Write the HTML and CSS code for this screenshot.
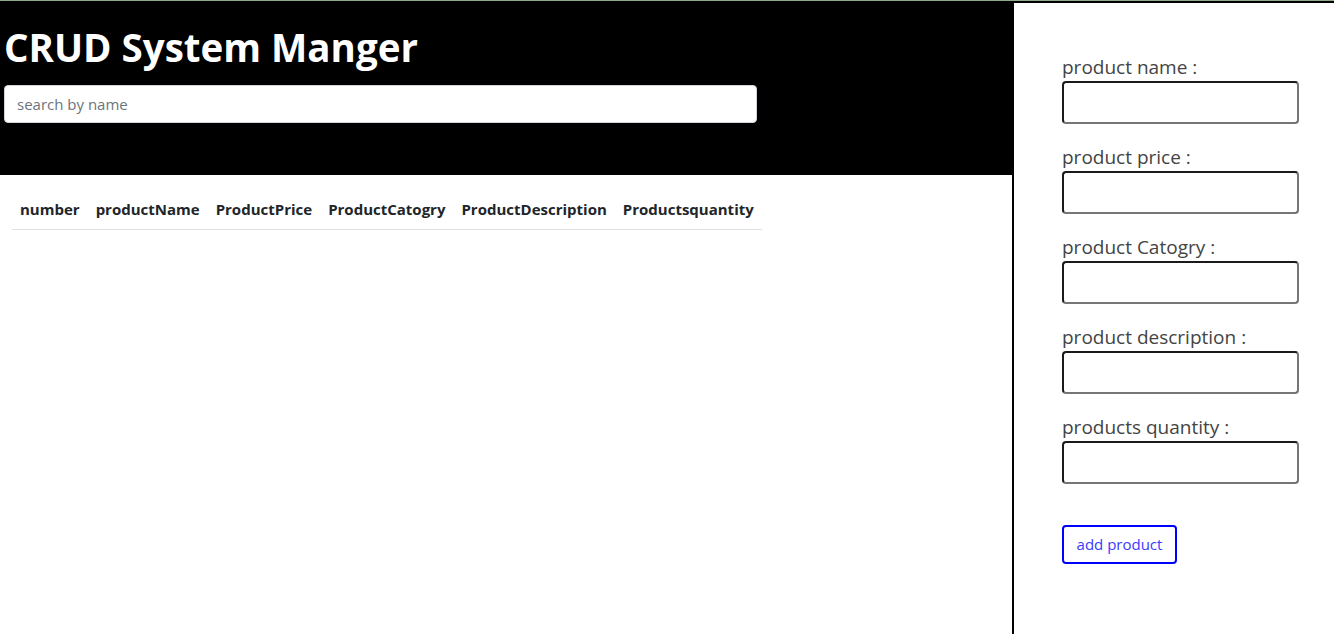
FILE: index.html
```html
<!DOCTYPE html>
<html lang="en">
<head>
<meta charset="utf-8">
<title>CRUD System Manger</title>
<link rel="stylesheet" href="styles.css">
</head>
<body>
<div class="page">
  <main class="main">
    <header class="hero">
      <h1 class="title">CRUD System Manger</h1>
      <input class="search" type="text" placeholder="search by name">
    </header>
    <table class="products">
      <thead>
        <tr>
          <th>number</th>
          <th>productName</th>
          <th>ProductPrice</th>
          <th>ProductCatogry</th>
          <th>ProductDescription</th>
          <th>Productsquantity</th>
        </tr>
      </thead>
      <tbody></tbody>
    </table>
  </main>
  <aside class="side">
    <form class="form">
      <label class="field-label" for="pname">product name :</label>
      <input class="field" id="pname" type="text">
      <label class="field-label" for="pprice">product price :</label>
      <input class="field" id="pprice" type="text">
      <label class="field-label" for="pcat">product Catogry :</label>
      <input class="field" id="pcat" type="text">
      <label class="field-label" for="pdesc">product description :</label>
      <input class="field" id="pdesc" type="text">
      <label class="field-label" for="pqty">products quantity :</label>
      <input class="field" id="pqty" type="text">
      <button class="add-btn" type="button">add product</button>
    </form>
  </aside>
</div>
</body>
</html>
```

FILE: styles.css
```css
* { box-sizing: border-box; }
html, body { margin: 0; padding: 0; }
body {
  font-family: "Open Sans", "Noto Sans", sans-serif;
  font-size: 16px;
  line-height: 1.5;
  color: #212529;
  background: #fff;
  border-top: 1px solid #92a88c;
  height: 634px;
  overflow: hidden;
}
.page {
  display: flex;
  height: 633px;
}
.main {
  width: 1012px;
  flex: none;
}
.hero {
  background: #000;
  height: 174px;
  padding: 22px 4px 0 4px;
}
.title {
  margin: 0 0 14px 0;
  color: #fff;
  font-size: 38.5px;
  font-weight: 700;
  line-height: 48px;
}
.search {
  display: block;
  width: 753px;
  height: 38px;
  padding: 6px 12px;
  font: inherit;
  font-size: 15px;
  color: #495057;
  background: #fff;
  border: 1px solid #ced4da;
  border-radius: 4px;
}
.search::placeholder { color: #6c757d; }
.products {
  margin: 14px 0 0 12px;
  border-collapse: collapse;
}
.products th {
  padding: 8px;
  font-size: 15px;
  font-weight: 700;
  text-align: left;
  color: #212529;
  border-bottom: 1px solid #dee2e6;
  line-height: 24px;
}
.side {
  flex: 1;
  border-left: 2px solid #000;
  border-top: 2px solid #000;
  padding: 54px 36px 0 48px;
}
.form {
  display: flex;
  flex-direction: column;
  align-items: flex-start;
}
.field-label {
  display: block;
  font-size: 19px;
  line-height: 20px;
  padding-bottom: 4px;
  color: #444;
}
.field {
  display: block;
  width: 237px;
  height: 43px;
  margin-bottom: 23px;
  font: inherit;
  border: 2px solid;
  border-color: #1a1a1a #767676 #767676 #1a1a1a;
  border-radius: 4px;
  background: #fff;
}
.field:last-of-type { margin-bottom: 41px; }
.add-btn {
  width: 115px;
  height: 39px;
  padding: 0;
  font: inherit;
  font-size: 15px;
  color: #3b3bff;
  background: #fff;
  border: 2px solid #0000ff;
  border-radius: 4px;
}
```
